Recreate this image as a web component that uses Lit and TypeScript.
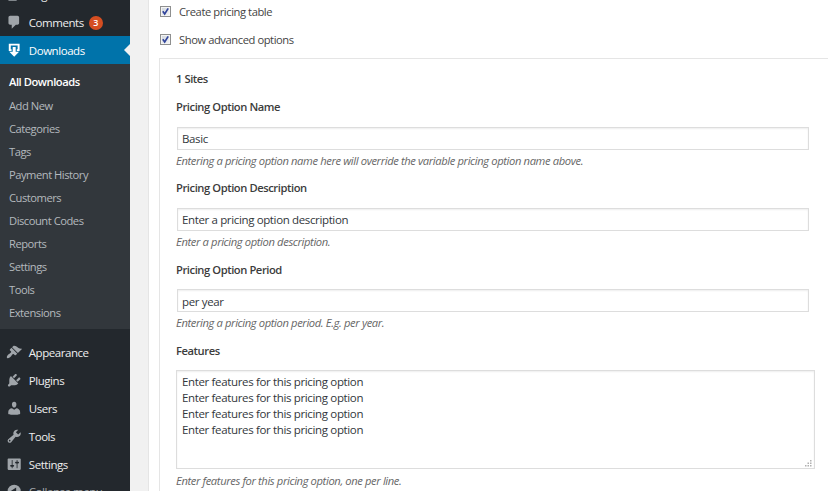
import { LitElement, html, css, svg } from "lit";
import { customElement } from "lit/decorators.js";
import { classMap } from "lit/directives/class-map.js";

const ICONS: Record<string, string> = {
  pages: "M6 15V2h10v13H6zm-1 1h8v2H3V5h2v11z",
  comments: "M5 2h9c1.1 0 2 .9 2 2v7c0 1.1-.9 2-2 2h-2l-5 5v-5H5c-1.1 0-2-.9-2-2V4c0-1.1.9-2 2-2z",
  downloads: "M3.4 2h13.2v9h-3.4V8.8h1V4.4H5.8v4.4h1V11H3.4zM8.2 6h3.6v6H16l-6 6-6-6h4.2z",
  appearance:
    "M14.48 11.06L7.41 3.99l1.5-1.5c.5-.56 2.3-.47 3.51.32 1.21.8 1.43 1.28 2.91 2.1 1.18.64 2.45 1.26 4.45.85zm-.71.71L6.7 4.7 4.93 6.47c-.39.39-.39 1.02 0 1.41l1.06 1.06c.39.39.39 1.03 0 1.42-.6.6-1.43 1.11-2.21 1.69-.35.26-.7.53-1.01.84C1.43 14.23.4 16.08 1.4 17.07c.99 1 2.84-.03 4.18-1.36.31-.31.58-.66.85-1.02.57-.78 1.08-1.61 1.69-2.21.39-.39 1.02-.39 1.41 0l1.06 1.06c.39.39 1.02.39 1.41 0z",
  plugins:
    "M13.11 4.36L9.87 7.6 8 5.73l3.24-3.24c.35-.34 1.05-.2 1.56.32.52.51.66 1.21.31 1.55zm-8 1.77l.91-1.12 9.01 9.01-1.19.84c-.71.71-2.63 1.16-3.82 1.16H6.14L4.9 17.26c-.59.59-1.54.59-2.12 0-.59-.58-.59-1.53 0-2.12l1.24-1.24v-3.88c0-1.13.4-3.19 1.09-3.89zm7.26 3.97l3.24-3.24c.34-.35 1.04-.21 1.55.31.52.51.66 1.21.31 1.55l-3.24 3.25z",
  users:
    "M10 9.25c-2.27 0-2.73-3.44-2.73-3.44C7 4.02 7.82 2 9.97 2c2.16 0 2.98 2.02 2.71 3.81 0 0-.41 3.44-2.68 3.44zm0 2.57L12.72 10c2.39 0 4.52 2.33 4.52 4.53v2.49s-3.65 1.13-7.24 1.13c-3.65 0-7.24-1.13-7.24-1.13v-2.49c0-2.25 1.94-4.48 4.47-4.48z",
  tools:
    "M16.68 9.77c-1.34 1.34-3.3 1.67-4.95.99l-5.41 6.52c-.99.99-2.59.99-3.58 0s-.99-2.59 0-3.57l6.52-5.42c-.68-1.65-.35-3.61.99-4.95 1.28-1.28 3.12-1.62 4.72-1.06l-2.89 2.89 2.82 2.82 2.86-2.87c.53 1.58.18 3.39-1.08 4.65zM3.81 16.21c.4.39 1.04.39 1.43 0 .4-.4.4-1.04 0-1.43-.39-.4-1.03-.4-1.43 0-.39.39-.39 1.03 0 1.43z",
  settings:
    "M18 16V4c0-.55-.45-1-1-1H3c-.55 0-1 .45-1 1v12c0 .55.45 1 1 1h14c.55 0 1-.45 1-1zM8 11h1c.55 0 1 .45 1 1s-.45 1-1 1H8v1.5c0 .28-.22.5-.5.5s-.5-.22-.5-.5V13H6c-.55 0-1-.45-1-1s.45-1 1-1h1V5.5c0-.28.22-.5.5-.5s.5.22.5.5V11zm5-2h-1c-.55 0-1-.45-1-1s.45-1 1-1h1V5.5c0-.28.22-.5.5-.5s.5.22.5.5V7h1c.55 0 1 .45 1 1s-.45 1-1 1h-1v5.5c0 .28-.22.5-.5.5s-.5-.22-.5-.5V9z",
  collapse: "M10 2a8 8 0 1 0 0 16 8 8 0 0 0 0-16zm2.4 3.6v8.8L5.6 10z",
};

const SUBMENU = [
  "All Downloads", "Add New", "Categories", "Tags", "Payment History", "Customers",
  "Discount Codes", "Reports", "Settings", "Tools", "Extensions",
];

const FIELDS = [
  { label: "Pricing Option Name", value: "Basic", help: "Entering a pricing option name here will override the variable pricing option name above." },
  { label: "Pricing Option Description", value: "Enter a pricing option description", help: "Enter a pricing option description." },
  { label: "Pricing Option Period", value: "per year", help: "Entering a pricing option period. E.g. per year." },
];

@customElement("admin-sidebar")
export class AdminSidebar extends LitElement {
  static styles = css`
    :host { display: block; box-sizing: border-box; width: 130px; height: 491px; overflow: hidden; background: #23282d; color: #eee; font-size: 11.5px; letter-spacing: -0.45px; }
    .menu { margin-top: -20px; }
    .item { position: relative; display: flex; align-items: center; height: 28px; padding-left: 6px; line-height: 28px; white-space: nowrap; }
    .icon { flex: none; width: 16.4px; height: 16.4px; margin: 0 6.4px 0 0; fill: #a0a5aa; }
    .name { padding-top: 2px; }
    .submenu ~ .item .name { padding-top: 0; }
    .submenu ~ .item .icon { margin-top: -2px; }
    .current { background: #0073aa; color: #fff; }
    .current .icon { fill: #fff; }
    .current::after { content: ""; position: absolute; right: 0; top: 7.5px; border: 6.5px solid transparent; border-left-width: 0; border-right-color: #f1f1f1; }
    .badge { width: 14px; height: 14px; margin: 1px 0 0 5px; border-radius: 50%; background: #d54e21; color: #fff; font-size: 9px; font-weight: 600; letter-spacing: 0; line-height: 14px; text-align: center; }
    .submenu { box-sizing: border-box; height: 265px; margin-bottom: 10px; padding: 7px 0 0 9px; background: #32373c; }
    .sub { height: 23px; line-height: 23px; color: #b4b9be; font-size: 11.2px; letter-spacing: -0.48px; white-space: nowrap; }
    .active { line-height: 22px; color: #fff; font-weight: 600; letter-spacing: -0.45px; }
    .muted { height: 26px; line-height: 26px; color: #a0a5aa; }
  `;

  item(icon: string, name: string, extra: { current?: boolean; muted?: boolean; count?: number } = {}) {
    return html`<div class=${classMap({ item: true, current: !!extra.current, muted: !!extra.muted })}>
      <svg class="icon" viewBox="0 0 20 20">${svg`<path fill-rule="evenodd" d=${ICONS[icon]}></path>`}</svg>
      <span class="name">${name}</span>
      ${extra.count ? html`<span class="badge">${extra.count}</span>` : null}
    </div>`;
  }

  render() {
    return html`<nav class="menu">
      ${this.item("pages", "Pages")}
      ${this.item("comments", "Comments", { count: 3 })}
      ${this.item("downloads", "Downloads", { current: true })}
      <div class="submenu">
        ${SUBMENU.map((s, i) => html`<div class=${classMap({ sub: true, active: i === 0 })}>${s}</div>`)}
      </div>
      ${this.item("appearance", "Appearance")}
      ${this.item("plugins", "Plugins")}
      ${this.item("users", "Users")}
      ${this.item("tools", "Tools")}
      ${this.item("settings", "Settings")}
      ${this.item("collapse", "Collapse menu", { muted: true })}
    </nav>`;
  }
}

@customElement("pricing-panel")
export class PricingPanel extends LitElement {
  static styles = css`
    :host { display: block; box-sizing: border-box; height: 491px; overflow: hidden; padding: 2px 0 0 10px; border-left: 1px solid #e5e5e5; background: #fff; color: #444; font-size: 11.2px; letter-spacing: -0.43px; }
    .check { display: flex; align-items: center; height: 20px; margin-bottom: 8px; padding-left: 1px; }
    .check .text { margin-top: -1px; }
    .box { flex: none; box-sizing: border-box; width: 11px; height: 11px; margin: -1px 8px 0 0; border: 1px solid #8e8f8f; background: linear-gradient(135deg, #cfd5dc, #f6f6f6); box-shadow: inset 0 0 0 1px #f4f4f4; }
    .tick { display: block; width: 9px; height: 9px; fill: none; stroke: #31449b; stroke-width: 1.7; }
    .options { border: 1px solid #e5e5e5; border-right: 0; height: 450px; padding: 10px 0 0 16px; }
    .title, .label { height: 20px; line-height: 20px; color: #3c3c3c; font-weight: 600; letter-spacing: -0.43px; }
    .title { margin-bottom: 8px; }
    .field { height: 81.4px; }
    .input { display: block; box-sizing: border-box; width: 632px; height: 23px; margin: 9.5px 0 0 1px; padding: 1px 4px 0; border: 1px solid #ddd; border-radius: 0; outline: 0; background: #fff; box-shadow: inset 0 1px 2px rgba(0,0,0,.07); color: #32373c; font: inherit; font-size: 11.5px; letter-spacing: -0.36px; }
    .help { height: 20px; margin-top: 1px; line-height: 20px; color: #666; font-style: italic; letter-spacing: -0.375px; white-space: nowrap; }
    .wrap { position: relative; width: 639px; height: 99px; margin-top: 9px; }
    .area { display: block; box-sizing: border-box; width: 100%; height: 100%; padding: 3px 5px; border: 1px solid #ddd; border-radius: 0; outline: 0; resize: none; box-shadow: inset 0 1px 2px rgba(0,0,0,.07); color: #32373c; font: inherit; font-size: 11.5px; letter-spacing: -0.35px; line-height: 16px; }
    .grip { position: absolute; right: 3px; bottom: 2px; width: 7px; height: 7px; fill: #b0b0b0; }
    .wrap + .help { margin-top: 2px; }
  `;

  check(text: string) {
    return html`<div class="check">
      <span class="box"><svg class="tick" viewBox="0 0 9 9"><path d="M1.8 4.2L3.7 7 7.2 1.4"></path></svg></span>
      <span class="text">${text}</span>
    </div>`;
  }

  render() {
    return html`
      ${this.check("Create pricing table")} ${this.check("Show advanced options")}
      <section class="options">
        <div class="title">1 Sites</div>
        ${FIELDS.map((f) => html`<div class="field">
          <div class="label">${f.label}</div>
          <input class="input" .value=${f.value} />
          <div class="help">${f.help}</div>
        </div>`)}
        <div class="label">Features</div>
        <div class="wrap">
          <textarea class="area" .value=${Array(4).fill("Enter features for this pricing option").join("\n")}></textarea>
          <svg class="grip" viewBox="0 0 7 7"><path d="M5 0h1.5v1.5H5zM2.5 2.5H4V4H2.5zM5 2.5h1.5V4H5zM0 5h1.5v1.5H0zM2.5 5H4v1.5H2.5zM5 5h1.5v1.5H5z"></path></svg>
        </div>
        <div class="help">Enter features for this pricing option, one per line.</div>
      </section>`;
  }
}

@customElement("app-root")
export class AppRoot extends LitElement {
  static styles = css`
    :host { display: grid; grid-template-columns: 130px 1fr; column-gap: 18px; height: 491px; overflow: hidden; background: #f1f1f1; font-family: "Open Sans", "Noto Sans", sans-serif; }
  `;
  render() {
    return html`<admin-sidebar></admin-sidebar><pricing-panel></pricing-panel>`;
  }
}
